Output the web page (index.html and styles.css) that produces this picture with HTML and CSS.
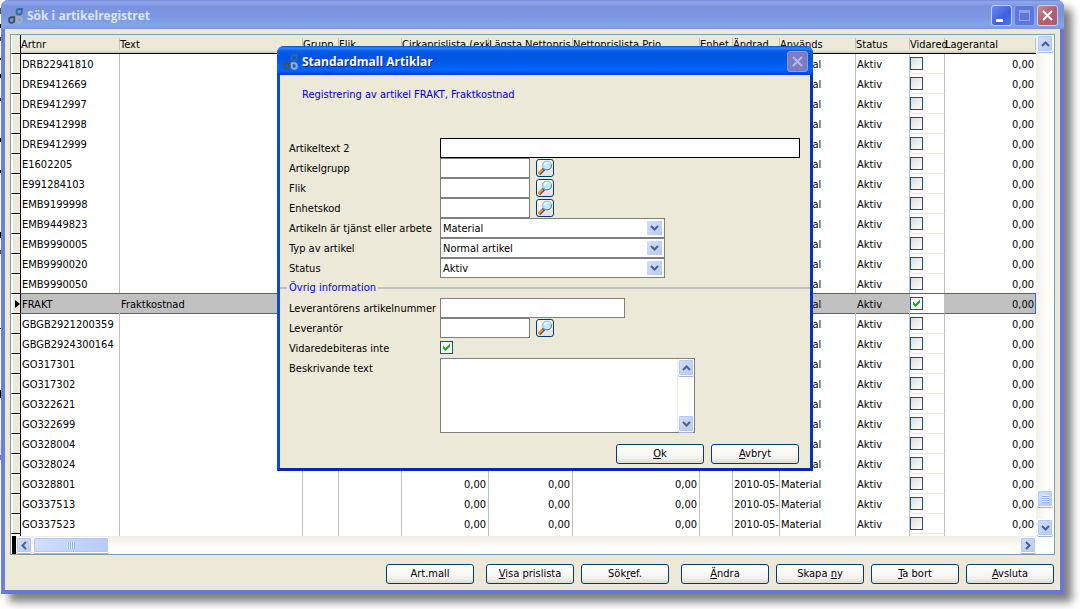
FILE: index.html
```html
<!DOCTYPE html>
<html lang="sv">
<head>
    <meta charset="UTF-8">
    <meta name="viewport" content="width=device-width, initial-scale=1.0">
    <title>Sök i artikelregistret</title>
    <link rel="stylesheet" href="styles.css">
</head>
<body>
    <!-- Shared icons -->
    <svg class="icon-defs" width="0" height="0" aria-hidden="true">
        <symbol id="logo" viewBox="0 0 15 16">
            <path d="M8.500 4Q8.500 1 11.200 1H13.800V3.800Q13.800 6.500 11 6.500Q8.500 6.500 8.500 4Z" fill="none" stroke="#2c6c9c" stroke-width="1.900"/>
            <path d="M1 12Q1 9.300 3.800 9.300H6.200V12Q6.200 14.800 3.500 14.800Q1 14.800 1 12Z" fill="none" stroke="#46505c" stroke-width="1.900"/>
            <path d="M8.700 9.300H11.200Q13.800 9.300 13.800 12Q13.800 14.800 11.200 14.800Q8.700 14.800 8.700 12Z" fill="none" stroke="#a9adb4" stroke-width="1.900"/>
        </symbol>
        <symbol id="up" viewBox="0 0 9 6">
            <path d="M1 5L4.500 1.500L8 5" fill="none" stroke="#4d6185" stroke-width="2"/>
        </symbol>
        <symbol id="down" viewBox="0 0 9 6">
            <path d="M1 1L4.500 4.500L8 1" fill="none" stroke="#4d6185" stroke-width="2"/>
        </symbol>
        <symbol id="left" viewBox="0 0 6 9">
            <path d="M5 1L1.500 4.500L5 8" fill="none" stroke="#4d6185" stroke-width="2"/>
        </symbol>
        <symbol id="right" viewBox="0 0 6 9">
            <path d="M1 1L4.500 4.500L1 8" fill="none" stroke="#4d6185" stroke-width="2"/>
        </symbol>
        <symbol id="cross" viewBox="0 0 11 11">
            <path d="M1 1L10 10M10 1L1 10" fill="none" stroke="currentColor" stroke-width="2"/>
        </symbol>
        <symbol id="search" viewBox="0 0 16 16">
            <path d="M2 14L7 9" stroke="#5c4a6a" stroke-width="3.400"/>
            <path d="M1.500 13.500L5.500 9.500" stroke="#f5a033" stroke-width="2.200"/>
            <circle cx="10" cy="5.500" r="4.500" fill="#b9ecfb" stroke="#a9b8d6" stroke-width="1.200"/>
            <path d="M6.500 8.500Q9 11 12.500 9.300Q15 7.500 14.500 4.500" fill="none" stroke="#6b7aa5" stroke-width="1"/>
            <path d="M7.500 5Q8 3 10.500 2.600" fill="none" stroke="#fff" stroke-width="1.500"/>
        </symbol>
    </svg>

    <div class="window">
        <div class="titlebar">
            <svg class="logo"><use href="#logo"/></svg>
            <h1>Sök i artikelregistret</h1>
            <button type="button" class="winbtn minimize" aria-label="Minimera"><span></span></button>
            <button type="button" class="winbtn maximize" aria-label="Maximera" disabled><span></span></button>
            <button type="button" class="winbtn close" aria-label="Stäng"><svg width="11" height="11"><use href="#cross"/></svg></button>
        </div>

        <div class="content">
            <div class="grid-panel">
                <div class="grid-main">
                    <table class="grid">
                        <colgroup>
                            <col class="c-marker">
                            <col class="c-artnr">
                            <col class="c-text">
                            <col class="c-grupp">
                            <col class="c-flik">
                            <col class="c-cirka">
                            <col class="c-lagsta">
                            <col class="c-netto">
                            <col class="c-enhet">
                            <col class="c-andrad">
                            <col class="c-anvands">
                            <col class="c-status">
                            <col class="c-vidare">
                            <col class="c-lager">
                        </colgroup>
                        <thead>
                            <tr>
                                <th class="marker"></th>
                                <th>Artnr</th>
                                <th>Text</th>
                                <th>Grupp</th>
                                <th>Flik</th>
                                <th class="clip">Cirkaprislista (exkl</th>
                                <th class="clip">Lägsta Nettopris</th>
                                <th>Nettoprislista Prio</th>
                                <th>Enhet</th>
                                <th>Ändrad</th>
                                <th>Används</th>
                                <th>Status</th>
                                <th>Vidared</th>
                                <th>Lagerantal</th>
                            </tr>
                        </thead>
                        <tbody id="articles"></tbody>
                    </table>
                    <div class="vscroll">
                        <button type="button" class="sbtn" aria-label="Rulla upp"><svg width="9" height="6"><use href="#up"/></svg></button>
                        <div class="vthumb"></div>
                        <button type="button" class="sbtn" aria-label="Rulla ned"><svg width="9" height="6"><use href="#down"/></svg></button>
                    </div>
                </div>
                <div class="hscroll">
                    <div class="split"></div>
                    <button type="button" class="sbtn" aria-label="Rulla vänster"><svg width="6" height="9"><use href="#left"/></svg></button>
                    <div class="hthumb"></div>
                    <button type="button" class="sbtn last" aria-label="Rulla höger"><svg width="6" height="9"><use href="#right"/></svg></button>
                </div>
            </div>

            <div class="toolbar">
                <button type="button" class="btn">Art.mall</button>
                <button type="button" class="btn group"><u>V</u>isa prislista</button>
                <button type="button" class="btn">Sök<u>r</u>ef.</button>
                <button type="button" class="btn group"><u>Ä</u>ndra</button>
                <button type="button" class="btn">Skapa <u>n</u>y</button>
                <button type="button" class="btn"><u>T</u>a bort</button>
                <button type="button" class="btn"><u>A</u>vsluta</button>
            </div>
        </div>

        <!-- Dialog on top of the list -->
        <div class="dialog" role="dialog" aria-labelledby="dialogTitle">
            <div class="dialog-title">
                <svg class="logo"><use href="#logo"/></svg>
                <h2 id="dialogTitle">Standardmall Artiklar</h2>
                <button type="button" class="winbtn close-off" aria-label="Stäng" disabled><svg width="11" height="11"><use href="#cross"/></svg></button>
            </div>
            <form class="dialog-body">
                <p class="info">Registrering av artikel FRAKT, Fraktkostnad</p>

                <div class="row">
                    <label for="text2">Artikeltext 2</label>
                    <input type="text" id="text2" class="wide">
                </div>
                <div class="row">
                    <label for="grupp">Artikelgrupp</label>
                    <input type="text" id="grupp" class="short">
                    <button type="button" class="lookup" aria-label="Sök artikelgrupp"><svg><use href="#search"/></svg></button>
                </div>
                <div class="row">
                    <label for="flik">Flik</label>
                    <input type="text" id="flik" class="short">
                    <button type="button" class="lookup" aria-label="Sök flik"><svg><use href="#search"/></svg></button>
                </div>
                <div class="row">
                    <label for="enhet">Enhetskod</label>
                    <input type="text" id="enhet" class="short">
                    <button type="button" class="lookup" aria-label="Sök enhetskod"><svg><use href="#search"/></svg></button>
                </div>
                <div class="row">
                    <label for="tjanst">Artikeln är tjänst eller arbete</label>
                    <div class="select">
                        <select id="tjanst"><option>Material</option></select>
                        <span class="arrow"><svg width="9" height="6"><use href="#down"/></svg></span>
                    </div>
                </div>
                <div class="row">
                    <label for="typ">Typ av artikel</label>
                    <div class="select">
                        <select id="typ"><option>Normal artikel</option></select>
                        <span class="arrow"><svg width="9" height="6"><use href="#down"/></svg></span>
                    </div>
                </div>
                <div class="row">
                    <label for="status">Status</label>
                    <div class="select">
                        <select id="status"><option>Aktiv</option></select>
                        <span class="arrow"><svg width="9" height="6"><use href="#down"/></svg></span>
                    </div>
                </div>

                <h3 class="section">Övrig information</h3>

                <div class="row">
                    <label for="levnr">Leverantörens artikelnummer</label>
                    <input type="text" id="levnr" class="medium">
                </div>
                <div class="row">
                    <label for="lev">Leverantör</label>
                    <input type="text" id="lev" class="short">
                    <button type="button" class="lookup" aria-label="Sök leverantör"><svg><use href="#search"/></svg></button>
                </div>
                <div class="row">
                    <label for="vidare">Vidaredebiteras inte</label>
                    <input type="checkbox" id="vidare" checked>
                </div>
                <div class="row">
                    <label for="beskrivning">Beskrivande text</label>
                    <div class="memo">
                        <textarea id="beskrivning"></textarea>
                        <div class="memo-scroll">
                            <button type="button" class="sbtn" aria-label="Rulla upp"><svg width="9" height="6"><use href="#up"/></svg></button>
                            <button type="button" class="sbtn" aria-label="Rulla ned"><svg width="9" height="6"><use href="#down"/></svg></button>
                        </div>
                    </div>
                </div>

                <div class="actions">
                    <button type="button" class="btn"><u>O</u>k</button>
                    <button type="button" class="btn"><u>A</u>vbryt</button>
                </div>
            </form>
        </div>
    </div>

    <script>
        // Fill the article list
        const articles = [
            'DRB22941810', 'DRE9412669', 'DRE9412997', 'DRE9412998', 'DRE9412999',
            'E1602205', 'E991284103', 'EMB9199998', 'EMB9449823', 'EMB9990005',
            'EMB9990020', 'EMB9990050', 'FRAKT', 'GBGB2921200359', 'GBGB2924300164',
            'GO317301', 'GO317302', 'GO322621', 'GO322699', 'GO328004',
            'GO328024', 'GO328801', 'GO337513', 'GO337523'
        ];
        const selected = 'FRAKT';

        const rows = articles.map(function(nr) {
            const isSelected = nr === selected;
            return '<tr class="' + (isSelected ? 'selected' : '') + '">' +
                '<td class="marker">' + (isSelected ? '<span class="pointer"></span>' : '') + '</td>' +
                '<td>' + nr + '</td>' +
                '<td>' + (isSelected ? 'Fraktkostnad' : '') + '</td>' +
                '<td></td><td></td>' +
                '<td class="num">0,00</td><td class="num">0,00</td><td class="num">0,00</td>' +
                '<td></td><td>2010-05-</td><td>Material</td><td>Aktiv</td>' +
                '<td class="check"><input type="checkbox" aria-label="Vidaredebiteras inte ' + nr + '"' + (isSelected ? ' checked' : '') + '></td>' +
                '<td class="num">0,00</td></tr>';
        });

        // Start of the next row, cut off by the scrollbar
        rows.push('<tr class="rest">' + '<td></td>'.repeat(14) + '</tr>');

        document.getElementById('articles').innerHTML = rows.join('');
    </script>
</body>
</html>
```
FILE: styles.css
```css
* {
    box-sizing: border-box;
}
body {
    margin: 0;
    padding: 0 16px 16px 1px;
    min-height: 100vh;
    display: flex;
    overflow: hidden;
    font-family: "DejaVu Sans Condensed", Tahoma, sans-serif;
    font-size: 11px;
    line-height: 14px;
    color: #000;
    background: #fff;
    /* edge of the window behind */
    background-image: linear-gradient(#fff 8px, #555 8px 14px, #fff 14px 24px, #000 24px 28px, #fff 28px 37px, #444 37px 41px, #fff 41px 58px, #000 58px 60px, #fff 60px 74px, #000 74px 78px, #fff 78px 98px, #333 98px 101px, #fff 101px 138px, #000 138px 142px, #fff 142px 170px, #000 170px 173px, #fff 173px 232px, #000 232px 238px, #fff 238px 250px, #555 250px 254px, #fff 254px 328px, #000 328px 329px, #fff 329px 390px, #000 390px 398px, #fff 398px 440px, #ece9d8 440px 455px, #6b7fd7 455px 460px, #fff 460px);
    background-size: 1px 100%;
    background-repeat: no-repeat;
}
h1, h2, h3, p {
    margin: 0;
    font-size: 11px;
    font-weight: normal;
}
button, input, select, textarea {
    font: inherit;
    color: inherit;
    margin: 0;
    padding: 0;
    border-radius: 0;
}
.icon-defs {
    position: absolute;
}

/* Main window */
.window {
    position: relative;
    flex: 1;
    min-width: 0;
    display: flex;
    flex-direction: column;
    border: solid #6b80db;
    border-width: 0 4px 4px;
    border-right-color: #6a77d6;
    border-bottom-color: #6777d6;
    border-radius: 7px 7px 0 0;
    background: #ece9d8;
    box-shadow: 8px 8px 9px rgba(0, 0, 0, 0.5);
}
.titlebar {
    display: flex;
    align-items: center;
    height: 29px;
    margin: 0 -4px;
    padding: 2px 6px 0 7px;
    gap: 2px;
    border-radius: 7px 7px 0 0;
    background: linear-gradient(#6f87db, #93a8e8 2px, #7b93df 6px, #7b96e1 16px, #82a6e9 25px, #7a96e0);
}
.logo {
    width: 15px;
    height: 16px;
    flex: none;
}
.titlebar h1, .dialog-title h2 {
    flex: 1;
    padding-left: 2px;
    font-family: "Open Sans", "Trebuchet MS", sans-serif;
    font-size: 12px;
    font-weight: bold;
}
.titlebar h1 {
    color: #dbe4f8;
}
.winbtn {
    display: flex;
    align-items: center;
    justify-content: center;
    flex: none;
    width: 21px;
    height: 21px;
    border: 1px solid #c6d3f8;
    border-radius: 3px;
    color: #fff;
}
.minimize {
    background: linear-gradient(135deg, #6f8cf0, #3c5fdf 60%, #4a7af0);
}
.minimize span {
    width: 7px;
    height: 3px;
    margin: 9px 5px 0 0;
    background: #fff;
}
.maximize {
    border-color: #91a4ea;
    background: #5d78dd;
}
.maximize span {
    width: 11px;
    height: 11px;
    border: 1px solid #8fa2ea;
    border-top-width: 3px;
}
.close {
    background: linear-gradient(135deg, #c98a98, #b4606c 50%, #a85a78);
}

.content {
    flex: 1;
    display: flex;
    flex-direction: column;
    padding: 5px 5px 6px 5px;
}
.toolbar {
    display: flex;
    justify-content: flex-end;
    gap: 7px;
    padding: 9px 1px 0 0;
}
.btn {
    width: 88px;
    height: 20px;
    border: 1px solid #003c74;
    border-radius: 3px;
    background: linear-gradient(#fff, #f3f3ee 70%, #dedbd0);
    text-align: center;
}
.btn.group {
    margin-left: 5px;
}

/* Article list */
.grid-panel {
    flex: 1;
    display: flex;
    flex-direction: column;
    border: 1px solid #7f9db9;
    background: #fff;
}
.grid-main {
    flex: 1;
    display: flex;
}
.grid {
    flex: 1;
    width: 0;
    table-layout: fixed;
    border-collapse: separate;
    border-spacing: 0;
    align-self: flex-start;
}
.c-marker { width: 10px; }
.c-artnr { width: 99px; }
.c-grupp { width: 36px; }
.c-flik { width: 63px; }
.c-cirka { width: 87px; }
.c-lagsta { width: 84px; }
.c-netto { width: 127px; }
.c-enhet { width: 33px; }
.c-andrad { width: 47px; }
.c-anvands { width: 76px; }
.c-status { width: 54px; }
.c-vidare { width: 35px; }
.c-lager { width: 91px; }
.grid th {
    height: 19px;
    padding: 2px 0 0;
    border-bottom: 1px solid #000;
    text-align: left;
    font-weight: normal;
    white-space: nowrap;
    background: linear-gradient(#c5c2b2, #c5c2b2) right 3px / 1px 12px no-repeat, linear-gradient(#ece9d8 15px, #cbc7b8);
}
.grid th.clip {
    overflow: hidden;
}
.grid td {
    height: 20px;
    padding: 2px 2px 0 1px;
    border-right: 1px solid #c0c0c0;
    white-space: nowrap;
    overflow: hidden;
}
.grid td:last-child {
    border-right: 0;
}
.grid .num {
    text-align: right;
}
.grid .marker {
    padding: 0;
    border-left: 1px solid #fff;
    border-right: 1px solid #000;
    border-bottom: 1px solid #000;
    background: #ece9d8;
}
.grid td.marker {
    box-shadow: inset 1px 1px 0 #fff;
}
.grid td.check {
    padding: 0;
    border-bottom: 1px solid #ece9d8;
}
.grid .rest td {
    height: 2px;
    padding: 0;
}
.grid .rest td:first-child {
    border-right-color: #000;
}
.pointer {
    display: block;
    margin-left: 3px;
    width: 0;
    border: 4px solid transparent;
    border-left: 5px solid #000;
    border-right: 0;
}
.selected td:not(.marker) {
    background: #c0c0c0;
    box-shadow: 0 -1px 0 #316ac5, inset 0 -1px 0 #316ac5;
}
.selected td.check:not(.marker) {
    background: #fff;
    border-bottom-color: #316ac5;
    box-shadow: 0 -1px 0 #316ac5;
}
.selected td:last-child {
    border-right: 1px solid #316ac5;
    padding-right: 1px;
}
input[type="checkbox"] {
    display: block;
    appearance: none;
    width: 13px;
    height: 13px;
    border: 1px solid #1c5180;
    background: linear-gradient(135deg, #dcdcd7, #fff);
}
input[type="checkbox"]:checked {
    background: url("data:image/svg+xml,%3Csvg xmlns='http://www.w3.org/2000/svg' viewBox='0 0 11 11'%3E%3Cpath d='M2 3.500L4.500 6L9 1.500V4.500L4.500 9L2 6.500Z' fill='%2321a121'/%3E%3C/svg%3E") #f7f7f5;
}

/* Scrollbars */
.sbtn, .vthumb, .hthumb {
    flex: none;
    display: flex;
    align-items: center;
    justify-content: center;
    width: 16px;
    height: 17px;
    border: 1px solid #fff;
    border-radius: 2px;
    background: linear-gradient(135deg, #d3e0fd, #b3c9fb);
    box-shadow: inset 0 0 0 1px #b5c7f2, 0 1px 0 #9cb4e4;
}
.vscroll {
    display: flex;
    flex-direction: column;
    align-items: center;
    width: 18px;
    background: linear-gradient(90deg, #f1f0e9, #fefefb 60%);
}
.vthumb {
    margin-top: auto;
    margin-bottom: 12px;
}
.vthumb::before {
    content: "";
    width: 7px;
    height: 8px;
    background: repeating-linear-gradient(#eef4fe 0 1px, #8cb0f8 1px 2px);
}
.hscroll {
    display: flex;
    height: 18px;
    margin-right: 18px;
    align-items: center;
    background: linear-gradient(#efeee6, #fefefb 70%);
}
.hscroll .sbtn {
    height: 16px;
}
.split {
    align-self: stretch;
    width: 4px;
    margin-left: 1px;
    background: #000;
}
.hthumb {
    width: 76px;
    height: 16px;
    margin-left: 1px;
}
.hthumb::before {
    content: "";
    width: 8px;
    height: 7px;
    background: repeating-linear-gradient(90deg, #eef4fe 0 1px, #8cb0f8 1px 2px);
}
.hscroll .last {
    margin-left: auto;
}

/* Dialog */
.dialog {
    position: absolute;
    top: 46px;
    left: 272px;
    width: 536px;
    border: 3px solid #0a48e0;
    border-top: 0;
    border-right-color: #0531c8;
    border-bottom-color: #0426b8;
    border-radius: 7px 7px 0 0;
    background: #ece9d8;
}
.dialog-title {
    display: flex;
    align-items: center;
    height: 29px;
    margin: 0 -3px;
    padding: 2px 5px 0 6px;
    gap: 2px;
    border-radius: 7px 7px 0 0;
    background: linear-gradient(#0a48c8, #2f8bff 2px, #0a5cea 5px, #0054e3 12px, #0066ff 24px, #003dd7);
    color: #fff;
}
.dialog-title h2 {
    text-shadow: 1px 1px 0 #0f1c80;
}
.close-off {
    border-color: #8f9ad8;
    background: #7c7cc4;
    color: #b9bbe6;
}
.dialog-body {
    padding: 0 11px 4px 9px;
}
.info {
    padding: 13px 13px 36px;
    color: #0000d8;
}
.row {
    display: grid;
    grid-template-columns: 151px max-content max-content;
    column-gap: 0;
    min-height: 20px;
}
.row label {
    height: 20px;
    padding-top: 4px;
    white-space: nowrap;
}
.row input[type="text"] {
    height: 20px;
    padding: 0 2px;
    border: 1px solid #7f7f7f;
    background: #fff;
}
.row input.wide {
    width: 360px;
    border-color: #000;
}
.row input.medium {
    width: 185px;
}
.row input.short {
    width: 90px;
}
.row input[type="checkbox"] {
    margin-top: 3px;
}
.lookup {
    width: 18px;
    height: 18px;
    margin: 1px 0 0 6px;
    border: 1px solid #003c74;
    border-radius: 3px;
    background: linear-gradient(#fff, #e4e2d8);
}
.lookup svg {
    display: block;
    width: 16px;
    height: 16px;
}
.select {
    position: relative;
    width: 225px;
}
.select select {
    display: block;
    appearance: none;
    width: 100%;
    height: 20px;
    padding: 2px 20px 0 2px;
    border: 1px solid #7f7f7f;
    background: #fff;
}
.arrow {
    position: absolute;
    top: 3px;
    right: 3px;
    display: flex;
    align-items: center;
    justify-content: center;
    width: 15px;
    height: 14px;
    background: linear-gradient(135deg, #d3e0fd, #b3c9fb);
    pointer-events: none;
}
.section {
    display: flex;
    align-items: center;
    height: 20px;
    margin: 0 -11px 0 -9px;
    gap: 2px;
    color: #0000ff;
}
.section::before, .section::after {
    content: "";
    height: 2px;
    background: #c0c0c0;
}
.section::before {
    width: 7px;
}
.section::after {
    flex: 1;
}
.memo {
    display: flex;
    width: 255px;
    height: 75px;
    border: 1px solid #7f7f7f;
    background: #fff;
}
.memo textarea {
    flex: 1;
    min-width: 0;
    border: 0;
    padding: 2px;
    resize: none;
    overflow: hidden;
    outline: none;
    background: none;
}
.memo-scroll {
    display: flex;
    flex-direction: column;
    justify-content: space-between;
    align-items: center;
    width: 17px;
    border-left: 1px solid #eeede5;
    background: #fefefb;
}
.actions {
    display: flex;
    justify-content: flex-end;
    gap: 7px;
    padding-top: 11px;
}
```
